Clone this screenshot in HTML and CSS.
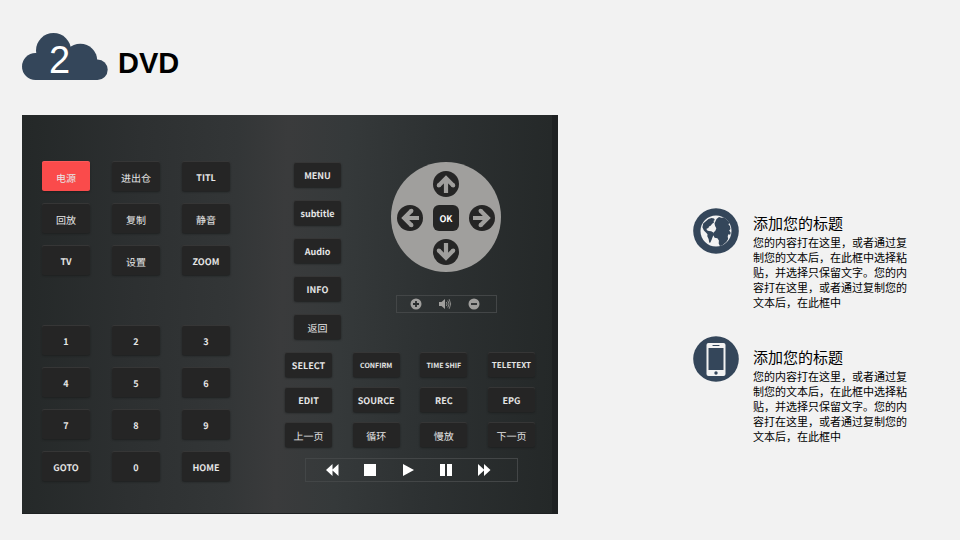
FILE: index.html
```html
<!DOCTYPE html>
<html lang="zh-CN">
<head>
<meta charset="utf-8">
<meta name="viewport" content="width=device-width, initial-scale=1">
<title>DVD</title>
<link rel="stylesheet" href="styles.css">
</head>
<body>
<svg class="symbols" aria-hidden="true">
  <symbol id="arrow" viewBox="0 0 26 26">
    <path d="M13 22V8M5.800 14.400 13 7.200l7.200 7.200" fill="none" stroke="currentColor" stroke-width="4.200"/>
    <path d="M5.800 14.400h0M20.200 14.400h0" stroke="currentColor" stroke-width="4.200" stroke-linecap="round"/>
  </symbol>
</svg>
<header class="header">
  <div class="cloud">
    <svg viewBox="0 0 86 47" fill="#34465a" aria-hidden="true">
      <circle cx="13.500" cy="33.500" r="13.500"/>
      <circle cx="31.500" cy="17.500" r="17.500"/>
      <circle cx="58.300" cy="27.700" r="17"/>
      <circle cx="75.500" cy="36.800" r="10.200"/>
      <path d="M13.500 27h62v20h-62z"/>
    </svg>
    <span class="cloud-number">2</span>
  </div>
  <h1 class="title">DVD</h1>
</header>
<main class="main">
  <section class="remote" aria-label="DVD">
    <div class="left">
      <div class="keys keys-wide">
        <button class="key power">电源</button><button class="key cjk">进出仓</button><button class="key">TITL</button>
        <button class="key cjk">回放</button><button class="key cjk">复制</button><button class="key cjk">静音</button>
        <button class="key">TV</button><button class="key cjk">设置</button><button class="key">ZOOM</button>
      </div>
      <div class="keys keys-wide">
        <button class="key">1</button><button class="key">2</button><button class="key">3</button>
        <button class="key">4</button><button class="key">5</button><button class="key">6</button>
        <button class="key">7</button><button class="key">8</button><button class="key">9</button>
        <button class="key">GOTO</button><button class="key">0</button><button class="key">HOME</button>
      </div>
    </div>
    <div class="right">
      <div class="upper">
        <div class="menu">
          <button class="key">MENU</button>
          <button class="key">subtitle</button>
          <button class="key">Audio</button>
          <button class="key">INFO</button>
          <button class="key cjk">返回</button>
        </div>
        <div class="navigation">
          <div class="dpad">
            <button class="round up" aria-label="Up"><svg><use href="#arrow"/></svg></button>
            <button class="round west" aria-label="Left"><svg><use href="#arrow"/></svg></button>
            <button class="round ok">OK</button>
            <button class="round east" aria-label="Right"><svg><use href="#arrow"/></svg></button>
            <button class="round down" aria-label="Down"><svg><use href="#arrow"/></svg></button>
          </div>
          <div class="bar volume">
            <button class="icon" aria-label="Volume up"><svg viewBox="0 0 12 12"><circle cx="6" cy="6" r="5.500" fill="#a09f9d"/><path d="M6 3v6M3 6h6" stroke="#292c2d" stroke-width="1.800"/></svg></button>
            <button class="icon" aria-label="Mute"><svg viewBox="0 0 12 12"><path d="M0 4h2.500L6 1v10L2.500 8H0z" fill="#a09f9d"/><path d="M7.300 4q1.400 2 0 4M8.800 2.500q2.500 3.500 0 7M10.200 1.200q3 4.800 0 9.600" fill="none" stroke="#a09f9d" stroke-width=".8"/></svg></button>
            <button class="icon" aria-label="Volume down"><svg viewBox="0 0 12 12"><circle cx="6" cy="6" r="5.500" fill="#a09f9d"/><path d="M3 6h6" stroke="#292c2d" stroke-width="1.800"/></svg></button>
          </div>
        </div>
      </div>
      <div class="keys keys-functions">
        <button class="key">SELECT</button><button class="key small">CONFIRM</button><button class="key small">TIME SHIF</button><button class="key medium">TELETEXT</button>
        <button class="key">EDIT</button><button class="key">SOURCE</button><button class="key">REC</button><button class="key">EPG</button>
        <button class="key cjk">上一页</button><button class="key cjk">循环</button><button class="key cjk">慢放</button><button class="key cjk">下一页</button>
      </div>
      <div class="bar playback">
        <button class="icon" aria-label="Rewind"><svg viewBox="0 0 12 12"><path d="M6.500 0v12L0 6zM12.500 0v12L6 6z" fill="#fff"/></svg></button>
        <button class="icon" aria-label="Stop"><svg viewBox="0 0 12 12"><path d="M0 0h12v12H0z" fill="#fff"/></svg></button>
        <button class="icon" aria-label="Play"><svg viewBox="0 0 12 12"><path d="M1 0l11 6-11 6z" fill="#fff"/></svg></button>
        <button class="icon" aria-label="Pause"><svg viewBox="0 0 12 12"><path d="M0 0h5v12H0zM7 0h5v12H7z" fill="#fff"/></svg></button>
        <button class="icon" aria-label="Fast forward"><svg viewBox="0 0 12 12"><path d="M0 0v12l6.500-6zM6 0v12l6.500-6z" fill="#fff"/></svg></button>
      </div>
    </div>
  </section>
  <aside class="notes">
    <article class="note">
      <svg class="badge" viewBox="0 0 46 46" aria-hidden="true">
        <circle cx="23" cy="23" r="22.800" fill="#34465a"/>
        <circle cx="23" cy="23" r="15.500" fill="#f2f2f2"/>
        <path d="M12.500 13.500 15.500 11l3-1 2.500.6.8 1.400-1.400 1 .8 1.200-2 1.600-1.600 2-1.600.7-.6 1.600-1.900.6.4 1.600 1.900.6 2.400.4 2.600 1.400.3 2-1.400 2-1 2.800-1.300 3-1.100.2-.7-3.800-1.300-2.600.2-2-1.600-1.800-2-2-1.500-3.200.8-3.800z" fill="#34465a"/>
        <path d="M23.500 11 26 9l2.500.8 2.500-.2 3 2.300 2.300 2.700-.8 1.800 1.400 1.500.6 3-1.300 1.500 1.500 2.400-.5 1.900-1.800-.5-.7 2 .4 2.800-1.600 2.700-2 1.700-2.400 2.200-2.200.4-1.200-2.500.2-3-1.500-2.300-2.800-.5-1.200-2.400.5-3 1.600-1.800.8-2.200-1.200-2.200-.6-2.600z" fill="#34465a"/>
      </svg>
      <div class="note-text">
        <h2>添加您的标题</h2>
        <p>您的内容打在这里，或者通过复制您的文本后，在此框中选择粘贴，并选择只保留文字。您的内容打在这里，或者通过复制您的文本后，在此框中</p>
      </div>
    </article>
    <article class="note note-phone">
      <svg class="badge" viewBox="0 0 46 46" aria-hidden="true">
        <circle cx="23" cy="23" r="22.800" fill="#34465a"/>
        <rect x="13.500" y="7" width="19" height="33" rx="2" fill="#f2f2f2"/>
        <path d="M15.500 12h15v22h-15z" fill="#34465a"/>
        <path d="M20 9.500h6" stroke="#34465a" stroke-width="1.200" stroke-linecap="round"/>
        <circle cx="23" cy="37" r="1.700" fill="#34465a"/>
      </svg>
      <div class="note-text">
        <h2>添加您的标题</h2>
        <p>您的内容打在这里，或者通过复制您的文本后，在此框中选择粘贴，并选择只保留文字。您的内容打在这里，或者通过复制您的文本后，在此框中</p>
      </div>
    </article>
  </aside>
</main>
</body>
</html>
```
FILE: styles.css
```css
* {
  box-sizing: border-box;
}

body {
  margin: 0;
  padding: 33px 22px 26px;
  background: #f2f2f2;
  color: #000;
  font-family: "Liberation Sans", "Noto Sans CJK SC", sans-serif;
}

h1, h2, p {
  margin: 0;
}

button {
  margin: 0;
  padding: 0;
  border: 0;
  color: #e6e6e6;
  font-family: "Noto Sans CJK SC", sans-serif;
  text-rendering: geometricPrecision;
  cursor: pointer;
}

svg {
  display: block;
}

.symbols {
  position: absolute;
  width: 0;
  height: 0;
}

.header {
  display: flex;
  align-items: flex-end;
  gap: 10px;
}

.cloud {
  display: grid;
  width: 86px;
}

.cloud svg,
.cloud-number {
  grid-area: 1 / 1;
}

.cloud-number {
  padding: 8px 0 0 27px;
  color: #fff;
  font-size: 38px;
  line-height: 38px;
}

.title {
  padding-bottom: 2px;
  font-size: 29px;
  line-height: 30px;
}

.main {
  display: flex;
  align-items: flex-start;
  justify-content: space-between;
  margin-top: 35px;
}

.remote {
  display: flex;
  gap: 55px;
  padding: 47px 17px 31px 20px;
  border-right: 6px solid #1e2122;
  border-bottom: 1px solid #1e2122;
  background: linear-gradient(92deg, #242828, #2d3031 22%, #333637 40%, #3a3b3c 49%, #35393a 60%, #2d3132 76%, #242828);
}

.left {
  display: grid;
  gap: 51px;
  align-content: start;
}

.right {
  width: 250px;
}

.keys {
  display: grid;
}

.keys-wide {
  grid-template-columns: repeat(3, 48px);
  grid-auto-rows: 29px;
  gap: 13px 22px;
}

.keys-functions {
  grid-template-columns: repeat(4, 47px);
  grid-auto-rows: 24px;
  row-gap: 11px;
  justify-content: space-between;
  margin-top: 14px;
}

.key {
  padding-top: 2px;
  border-radius: 2px;
  background: #252525;
  box-shadow: 0 -1px 0 #363636, 0 1px 2px #1e2020;
  font-size: 9px;
  font-weight: 700;
  line-height: 12px;
  white-space: nowrap;
}

.cjk,
.power {
  font-size: 10px;
  font-weight: 400;
}

.power {
  background: #fa4b4b;
  box-shadow: 0 -1px 0 #fa5a5a, 0 1px 2px #1e2020;
}

.medium {
  font-size: 8px;
}

.small {
  font-size: 7px;
}

.upper {
  display: flex;
  gap: 50px;
  padding-left: 9px;
}

.menu {
  display: grid;
  grid-template-columns: 47px;
  grid-auto-rows: 24px;
  gap: 14px;
  padding-top: 1px;
}

.navigation {
  display: flex;
  flex-direction: column;
  align-items: center;
  gap: 23px;
}

.dpad {
  display: grid;
  grid-template: "a up b" 26px "west ok east" 26px "c down d" 26px / 26px 26px 26px;
  gap: 8px 10px;
  place-content: center;
  width: 110px;
  height: 110px;
  padding-top: 2px;
  border-radius: 50%;
  background: #a09f9d;
}

.round {
  border-radius: 50%;
  background: #252525;
  color: #a09f9d;
}

.round svg {
  width: 26px;
  height: 26px;
}

.up { grid-area: up; }
.west { grid-area: west; transform: rotate(-90deg); }
.east { grid-area: east; transform: rotate(90deg); }
.down { grid-area: down; transform: rotate(180deg); }

.ok {
  grid-area: ok;
  border-radius: 6px;
  color: #fff;
  font-size: 9px;
  font-weight: 700;
}

.bar {
  display: flex;
  align-items: center;
  border: 1px solid #434647;
}

.icon {
  width: 12px;
  height: 12px;
  background: none;
}

.icon svg {
  overflow: visible;
}

.volume {
  gap: 17px;
  width: 101px;
  height: 18px;
  padding-left: 13px;
}

.playback {
  gap: 26px;
  width: 213px;
  height: 24px;
  margin: 11px 0 0 20px;
  padding-left: 20px;
}

.notes {
  display: grid;
  gap: 25px;
  padding: 93px 25px 0 0;
}

.note {
  display: flex;
  align-items: flex-start;
  gap: 14px;
}

.badge {
  width: 46px;
  height: 46px;
}

.note-text {
  width: 160px;
  padding-top: 7px;
}

.note-phone .note-text {
  padding-top: 13px;
}

.note h2 {
  font-size: 15px;
  font-weight: 400;
  line-height: 18px;
}

.note p {
  padding-top: 3px;
  font-size: 11px;
  line-height: 15px;
}
```
